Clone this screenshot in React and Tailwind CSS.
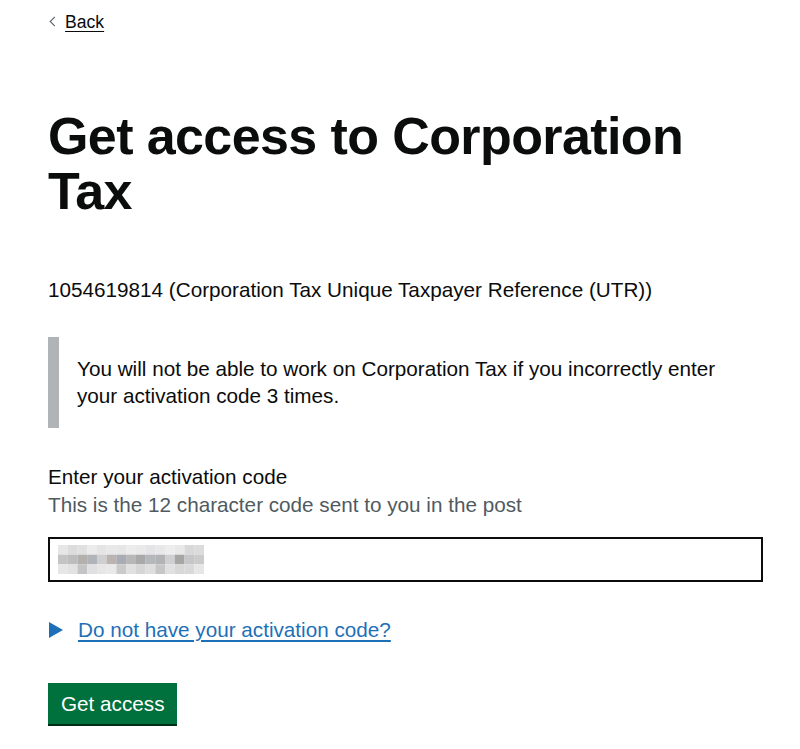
import React from "react";

const blur = [
  ["#e6e6e6","#dcdcdc","#e0e0e0","#ebebeb","#e4e4e4","#e8e8ea","#e6e6e6","#ececec","#e9e9e9","#e4e4e6","#e8e8e8","#ededed","#e8e8e8","#d8d8d8","#dcdcdc"],
  ["#c4c4c4","#bdbdbd","#b4b0ae","#b0b4b8","#cfcfcf","#bab4b0","#a9acb2","#b7b7b9","#a9a9a9","#b5b8bb","#b3b3b6","#cfcfd1","#a8a6a5","#c6c6c8","#cbcbcb"],
  ["#e6e6e6","#e2e2e2","#c4c4c4","#e0e0e2","#e6e6e6","#e9e9ea","#cacaca","#e0e0e0","#d6d6d6","#dedede","#c6c6c6","#e0e0e0","#d8d8d8","#d9d9d9","#e6e6e6"],
];

function Blurred() {
  return (
    <svg width="146" height="29" viewBox="0 0 146 29" className="block">
      {blur.map((row, r) =>
        row.map((c, i) => (
          <rect key={r + "-" + i} x={i * 9.73} y={r * 9.67} width="9.8" height="9.7" fill={c} />
        ))
      )}
    </svg>
  );
}

export default function App() {
  return (
    <div className="min-h-[749px] bg-white text-[#0b0c0c] px-[48px] font-['Liberation_Sans',Arial,sans-serif]">
      <div className="pt-[8px]">
        <a href="#" className="inline-flex items-center gap-[7px] text-[17.6px] leading-[20px] text-[#0b0c0c] underline underline-offset-[3px]">
          <span className="inline-block w-[7px] h-[7px] border-l border-b border-[#505a5f] rotate-45 ml-[3px]"></span>
          Back
        </a>
      </div>

      <h1 className="mt-[77px] text-[52px] leading-[55px] font-bold tracking-[-0.6px] w-[660px]">
        Get access to Corporation Tax
      </h1>

      <p className="mt-[57px] text-[20.7px] leading-[27px]">
        1054619814 (Corporation Tax Unique Taxpayer Reference (UTR))
      </p>

      <div className="mt-[34px] border-l-[11px] border-[#b1b4b6] pl-[18px] pt-[18px] pb-[19px] text-[20.7px] leading-[27px] w-[680px]">
        You will not be able to work on Corporation Tax if you incorrectly enter your activation code 3 times.
      </div>

      <div className="mt-[35px]">
        <label className="block text-[20.7px] leading-[27px]">Enter your activation code</label>
        <div className="text-[20.7px] leading-[27px] text-[#505a5f] mt-[1px]">This is the 12 character code sent to you in the post</div>
        <div className="mt-[19px] h-[45px] w-[715px] border-[2px] border-[#0b0c0c] flex items-center pl-[8px]">
          <Blurred />
        </div>
      </div>

      <div className="mt-[34px] flex items-center gap-[15px]">
        <svg width="14" height="16" viewBox="0 0 14 16" className="ml-[1px]">
          <polygon points="0,0 14,8 0,16" fill="#1d70b8" />
        </svg>
        <a href="#" className="text-[20.7px] leading-[27px] text-[#1d70b8] underline underline-offset-[3px]">Do not have your activation code?</a>
      </div>

      <div className="mt-[40px]">
        <button className="bg-[#00703c] text-white text-[20.7px] leading-[21px] px-[13px] pt-[10px] pb-[10px] shadow-[0_2px_0_#002d18]">
          Get access
        </button>
      </div>
    </div>
  );
}
